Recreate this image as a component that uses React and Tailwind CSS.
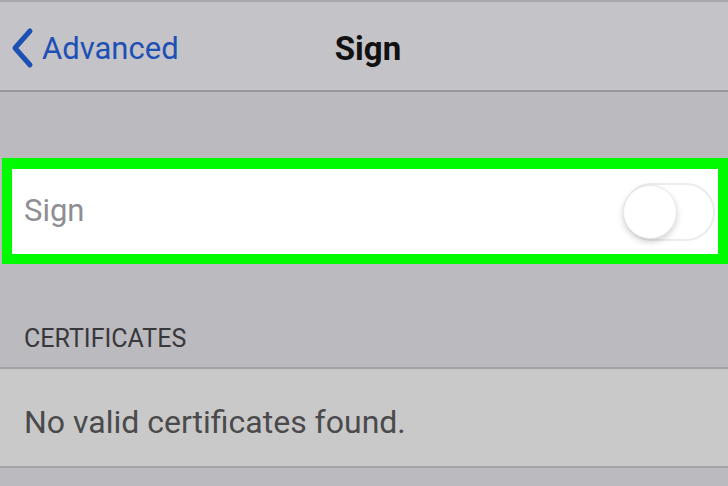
export default function App() {
  return (
    <div className="w-[728px] h-[486px] overflow-hidden bg-[#bbbabf] flex flex-col" style={{ fontFamily: 'Roboto, "Liberation Sans", sans-serif' }}>
      {/* Nav bar */}
      <div className="h-[92px] shrink-0 bg-[#c4c3c8] border-t-2 border-t-[#a9a8ad] border-b-2 border-b-[#98979c] relative flex items-center pt-[4px]">
        <div className="flex items-center pl-[10px] gap-[8px]">
          <svg width="24" height="42" viewBox="0 0 24 42">
            <path d="M20 4 L5 21 L20 38" fill="none" stroke="#1d50b4" strokeWidth="5" strokeLinecap="round" strokeLinejoin="round" />
          </svg>
          <span className="text-[31px] text-[#1d50b4] leading-none">Advanced</span>
        </div>
        <span className="absolute left-[8px] right-0 text-center text-[33px] font-bold text-[#111] leading-none pointer-events-none">Sign</span>
      </div>

      <div className="h-[66px] shrink-0" />

      {/* Highlighted toggle row */}
      <div className="ml-[2px] h-[106px] shrink-0 border-[10px] border-t-[11px] border-[#00fb00] bg-white flex items-center justify-between pl-[12px] pr-[3px]">
        <span className="text-[31px] text-[#8e8e93]">Sign</span>
        <div className="w-[92px] h-[58px] rounded-full border-2 border-[#ececec] bg-white relative">
          <div className="absolute left-[-2px] top-[0px] w-[54px] h-[54px] rounded-full bg-white shadow-[0_3px_6px_rgba(0,0,0,0.18)] border border-[#e8e8e8]" />
        </div>
      </div>

      {/* Section header */}
      <div className="h-[103px] shrink-0 flex items-end pb-[10px] pl-[24px]">
        <span className="text-[25px] text-[#38383b]">CERTIFICATES</span>
      </div>

      {/* Row */}
      <div className="h-[101px] shrink-0 bg-[#c9c9c9] border-y-2 border-[#a3a2a6] flex items-center pl-[24px] pt-[8px]">
        <span className="text-[32px] text-[#4a4a4c]">No valid certificates found.</span>
      </div>

      <div className="flex-1" />
    </div>
  )
}
